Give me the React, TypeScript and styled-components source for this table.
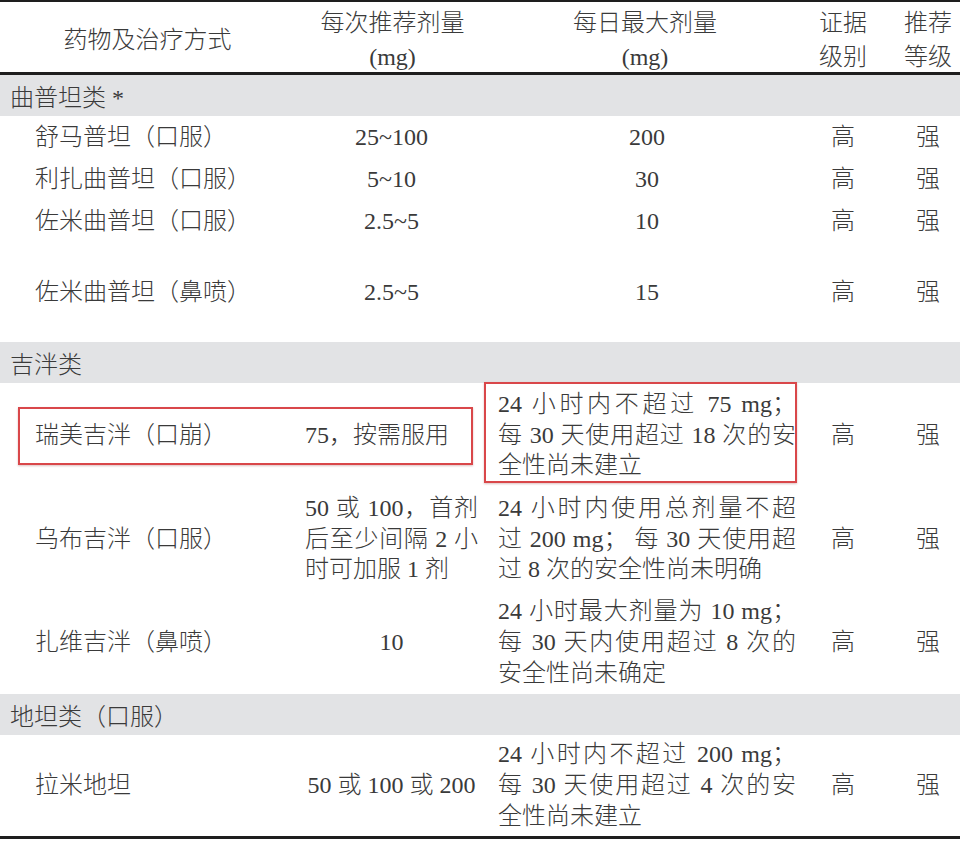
import React from "react";
import styled, { createGlobalStyle } from "styled-components";

const Global = createGlobalStyle`
  html, body { margin: 0; padding: 0; background: #ffffff; }
  body {
    font-family: "Liberation Serif", "Noto Sans CJK SC", serif;
    color: #3a3a3a;
  }
`;

const COLS = "295px 195px 310px 86px 74px";

const Table = styled.div`
  width: 960px;
  display: flex;
  flex-direction: column;
  font-size: 24px;
  border-top: 2px solid #1e1e1e;
  border-bottom: 3px solid #1e1e1e;
`;

const HeaderRow = styled.div`
  display: grid;
  grid-template-columns: ${COLS};
  height: 70px;
  align-items: center;
  border-bottom: 3px solid #1e1e1e;
`;

const HeadCell = styled.div<{ $pl?: number }>`
  text-align: center;
  line-height: 34px;
  padding-top: 4px;
  padding-left: ${(p) => p.$pl ?? 0}px;
  font-weight: 300;
`;

const SectionRow = styled.div`
  height: 41px;
  background: #e2e3e5;
  display: flex;
  align-items: center;
  padding-left: 10px;
  font-weight: 300;
`;

const Row = styled.div<{ $h: number }>`
  position: relative;
  display: grid;
  grid-template-columns: ${COLS};
  height: ${(p) => p.$h}px;
  align-items: center;
  font-weight: 300;
  line-height: 30.7px;
`;

const NameCell = styled.div`
  padding-left: 35px;
  white-space: nowrap;
`;

const DoseCell = styled.div<{ $left?: boolean }>`
  padding: 0 12px 0 10px;
  text-align: ${(p) => (p.$left ? "left" : "center")};
  white-space: nowrap;
`;

const MaxCell = styled.div<{ $left?: boolean }>`
  padding: 0 4px 0 8px;
  text-align: ${(p) => (p.$left ? "left" : "center")};
  white-space: nowrap;
`;

const GradeCell = styled.div<{ $pl?: number }>`
  text-align: center;
  padding-left: ${(p) => p.$pl ?? 0}px;
`;

const Line = styled.span<{ $full?: boolean }>`
  display: block;
  text-align: ${(p) => (p.$full ? "justify" : "left")};
  text-align-last: ${(p) => (p.$full ? "justify" : "left")};
  text-justify: inter-character;
`;

const Mark = styled.div<{ $l: number; $t: number; $w: number; $h: number }>`
  position: absolute;
  left: ${(p) => p.$l}px;
  top: ${(p) => p.$t}px;
  width: ${(p) => p.$w}px;
  height: ${(p) => p.$h}px;
  box-sizing: border-box;
  border: 2px solid #d9474a;
  box-shadow: 0 1px 2px rgba(120, 0, 0, 0.25);
  pointer-events: none;
`;

type Simple = { name: string; dose: string; max: string; h: number };

const triptans: Simple[] = [
  { name: "舒马普坦（口服）", dose: "25~100", max: "200", h: 42 },
  { name: "利扎曲普坦（口服）", dose: "5~10", max: "30", h: 42 },
  { name: "佐米曲普坦（口服）", dose: "2.5~5", max: "10", h: 43 },
  { name: "佐米曲普坦（鼻喷）", dose: "2.5~5", max: "15", h: 99 },
];

const Grades: React.FC<{}> = () => (
  <>
    <GradeCell>高</GradeCell>
    <GradeCell $pl={10}>强</GradeCell>
  </>
);

const Para: React.FC<{ lines: string[] }> = ({ lines }) => (
  <>
    {lines.map((l, i) => (
      <Line key={i} $full={i < lines.length - 1}>
        {l}
      </Line>
    ))}
  </>
);

export default function App() {
  return (
    <>
      <Global />
      <Table>
        <HeaderRow>
          <HeadCell>药物及治疗方式</HeadCell>
          <HeadCell>
            每次推荐剂量
            <br />
            (mg)
          </HeadCell>
          <HeadCell>
            每日最大剂量
            <br />
            (mg)
          </HeadCell>
          <HeadCell>
            证据
            <br />
            级别
          </HeadCell>
          <HeadCell $pl={10}>
            推荐
            <br />
            等级
          </HeadCell>
        </HeaderRow>

        <SectionRow>曲普坦类 *</SectionRow>
        {triptans.map((r) => (
          <Row key={r.name} $h={r.h}>
            <NameCell>{r.name}</NameCell>
            <DoseCell>{r.dose}</DoseCell>
            <MaxCell>{r.max}</MaxCell>
            <Grades />
          </Row>
        ))}

        <SectionRow>吉泮类</SectionRow>
        <Row $h={104}>
          <NameCell>瑞美吉泮（口崩）</NameCell>
          <DoseCell $left>75，按需服用</DoseCell>
          <MaxCell $left>
            <Para
              lines={[
                "24 小时内不超过 75 mg；",
                "每 30 天使用超过 18 次的安",
                "全性尚未建立",
              ]}
            />
          </MaxCell>
          <Grades />
          <Mark $l={18} $t={24} $w={455} $h={58} />
          <Mark $l={484} $t={-1} $w={313} $h={101} />
        </Row>
        <Row $h={104}>
          <NameCell>乌布吉泮（口服）</NameCell>
          <DoseCell $left>
            <Para lines={["50 或 100，首剂", "后至少间隔 2 小", "时可加服 1 剂"]} />
          </DoseCell>
          <MaxCell $left>
            <Para
              lines={[
                "24 小时内使用总剂量不超",
                "过 200 mg；  每 30 天使用超",
                "过 8 次的安全性尚未明确",
              ]}
            />
          </MaxCell>
          <Grades />
        </Row>
        <Row $h={103}>
          <NameCell>扎维吉泮（鼻喷）</NameCell>
          <DoseCell>10</DoseCell>
          <MaxCell $left>
            <Para
              lines={[
                "24 小时最大剂量为 10 mg；",
                "每 30 天内使用超过 8 次的",
                "安全性尚未确定",
              ]}
            />
          </MaxCell>
          <Grades />
        </Row>

        <SectionRow>地坦类（口服）</SectionRow>
        <Row $h={101}>
          <NameCell>拉米地坦</NameCell>
          <DoseCell>50 或 100 或 200</DoseCell>
          <MaxCell $left>
            <Para
              lines={[
                "24 小时内不超过 200 mg；",
                "每 30 天使用超过 4 次的安",
                "全性尚未建立",
              ]}
            />
          </MaxCell>
          <Grades />
        </Row>
      </Table>
    </>
  );
}
